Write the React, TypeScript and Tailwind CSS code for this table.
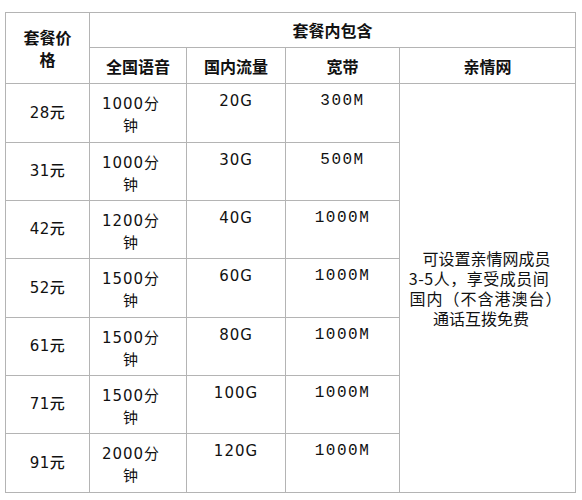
import React from "react";

const rows = [
  { price: "28元", voice: "1000分钟", data: "20G", bb: "300M", h: "h-[59px]" },
  { price: "31元", voice: "1000分钟", data: "30G", bb: "500M", h: "h-[58px]" },
  { price: "42元", voice: "1200分钟", data: "40G", bb: "1000M", h: "h-[58px]" },
  { price: "52元", voice: "1500分钟", data: "60G", bb: "1000M", h: "h-[59px]" },
  { price: "61元", voice: "1500分钟", data: "80G", bb: "1000M", h: "h-[58px]" },
  { price: "71元", voice: "1500分钟", data: "100G", bb: "1000M", h: "h-[58px]" },
  { price: "91元", voice: "2000分钟", data: "120G", bb: "1000M", h: "h-[59px]" },
];

const cell = "border border-[#b4b4b4] p-0";
const cjk = { fontFamily: '"Noto Sans CJK SC", sans-serif' };

export default function App() {
  return (
    <div className="w-[582px] h-[500px] bg-white pt-[12px] pl-[5px] text-[#111]" style={{ fontFamily: '"DejaVu Sans", "Noto Sans CJK SC", sans-serif' }}>
      <table className="table-fixed border-collapse w-[570px] text-[15px]">
        <colgroup>
          <col className="w-[84px]" />
          <col className="w-[97px]" />
          <col className="w-[99px]" />
          <col className="w-[114px]" />
          <col className="w-[176px]" />
        </colgroup>
        <thead>
          <tr className="h-[35px]">
            <th rowSpan={2} className={`${cell} font-bold text-[16px] leading-[22px] align-middle`}>
              <div className="w-[52px] mx-auto text-center" style={cjk}>套餐价格</div>
            </th>
            <th colSpan={4} className={`${cell} font-bold text-[16px] text-center align-middle`} style={cjk}>套餐内包含</th>
          </tr>
          <tr className="h-[36px]">
            {["全国语音", "国内流量", "宽带", "亲情网"].map((t) => (
              <th key={t} className={`${cell} font-bold text-[16px] text-center align-middle`} style={cjk}>{t}</th>
            ))}
          </tr>
        </thead>
        <tbody>
          {rows.map((r, i) => (
            <tr key={i} className={r.h}>
              <td className={`${cell} text-center align-middle tracking-[0.5px] font-medium`}>{r.price}</td>
              <td className={`${cell} align-top pt-[9px] pl-[11px]`}>
                <div className="w-[60px] text-center leading-[22px] tracking-[1px]">{r.voice}</div>
              </td>
              <td className={`${cell} align-top pt-[6px] text-center leading-[22px] tracking-[1px]`}>{r.data}</td>
              <td className={`${cell} align-top pt-[6px] text-center leading-[22px] text-[16px] tracking-[1.5px]`} style={{ fontFamily: '"Liberation Mono", monospace' }}>{r.bb}</td>
              {i === 0 && (
                <td rowSpan={7} className={`${cell} align-middle`}>
                  <div className="flex flex-col items-center ml-[-7px] text-[16px] leading-[20px] whitespace-nowrap" style={cjk}>
                    <span className="pl-[5px]">可设置亲情网成员</span>
                    <span className="pr-[10px] tracking-[0.5px]">3-5人，享受成员间</span>
                    <span className="pl-[4px] tracking-[1px]">国内（不含港澳台）</span>
                    <span className="pr-[6px]">通话互拨免费</span>
                  </div>
                </td>
              )}
            </tr>
          ))}
        </tbody>
      </table>
    </div>
  );
}
